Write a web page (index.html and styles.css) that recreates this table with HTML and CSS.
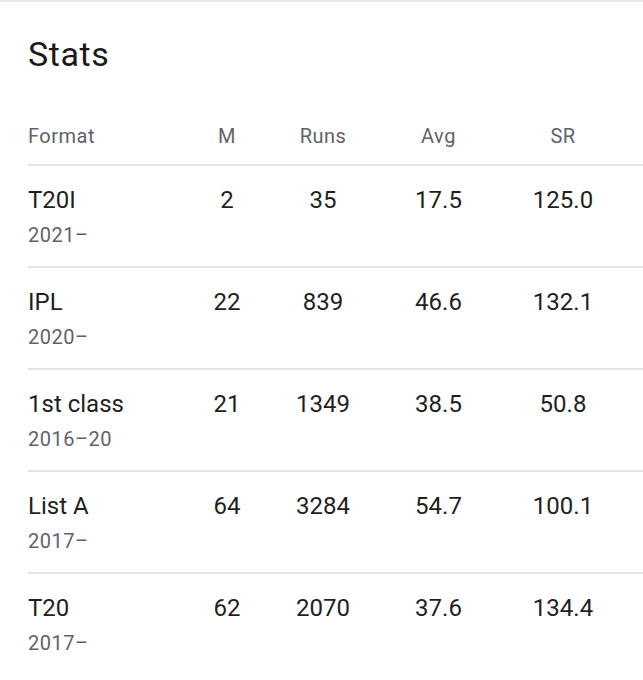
FILE: index.html
```html
<!DOCTYPE html>
<html lang="en">
<head>
<meta charset="utf-8">
<title>Stats</title>
<link rel="stylesheet" href="styles.css">
</head>
<body>
<main class="card">
  <h2 class="title">Stats</h2>
  <div class="stats">
    <div class="row head">
      <div class="cell fmt">Format</div>
      <div class="cell num">M</div>
      <div class="cell num">Runs</div>
      <div class="cell num">Avg</div>
      <div class="cell num">SR</div>
      <div class="cell"></div>
    </div>
    <div class="row">
      <div class="cell fmt"><div class="name">T20I</div><div class="years">2021–</div></div>
      <div class="cell num">2</div>
      <div class="cell num">35</div>
      <div class="cell num">17.5</div>
      <div class="cell num">125.0</div>
      <div class="cell"></div>
    </div>
    <div class="row">
      <div class="cell fmt"><div class="name">IPL</div><div class="years">2020–</div></div>
      <div class="cell num">22</div>
      <div class="cell num">839</div>
      <div class="cell num">46.6</div>
      <div class="cell num">132.1</div>
      <div class="cell"></div>
    </div>
    <div class="row">
      <div class="cell fmt"><div class="name">1st class</div><div class="years">2016–20</div></div>
      <div class="cell num">21</div>
      <div class="cell num">1349</div>
      <div class="cell num">38.5</div>
      <div class="cell num">50.8</div>
      <div class="cell"></div>
    </div>
    <div class="row">
      <div class="cell fmt"><div class="name">List A</div><div class="years">2017–</div></div>
      <div class="cell num">64</div>
      <div class="cell num">3284</div>
      <div class="cell num">54.7</div>
      <div class="cell num">100.1</div>
      <div class="cell"></div>
    </div>
    <div class="row last">
      <div class="cell fmt"><div class="name">T20</div><div class="years">2017–</div></div>
      <div class="cell num">62</div>
      <div class="cell num">2070</div>
      <div class="cell num">37.6</div>
      <div class="cell num">134.4</div>
      <div class="cell"></div>
    </div>
  </div>
</main>
</body>
</html>
```

FILE: styles.css
```css
html, body {
  margin: 0;
  padding: 0;
  background: #ffffff;
}

body {
  font-family: Roboto, "Noto Sans", Arial, sans-serif;
  color: #1f1f1f;
  overflow: hidden;
}

.card {
  border-top: 2px solid #e8eaed;
  padding: 32px 0 0 28px;
}

.title {
  margin: 0;
  font-size: 34px;
  line-height: 40px;
  font-weight: 400;
  letter-spacing: 0.6px;
  color: #1a1a1a;
}

.stats {
  margin-top: 50px;
}

.row {
  display: grid;
  grid-template-columns: 169px 60px 132px 99px 150px 1fr;
  align-items: start;
  border-bottom: 2px solid #e3e4e6;
  padding: 20px 0 19px;
}

.row.last {
  border-bottom: none;
}

.row.head {
  padding: 0 0 16px;
  font-size: 20px;
  line-height: 24px;
  letter-spacing: 0.5px;
  color: #5f6368;
}

.row:not(.head) .cell {
  font-size: 24px;
  line-height: 28px;
}

.num {
  text-align: center;
  white-space: nowrap;
}

.fmt {
  text-align: left;
}

.row:not(.head) .years {
  margin-top: 9px;
  font-size: 20px;
  line-height: 24px;
  letter-spacing: 0.5px;
  color: #5f6368;
}

.name {
  white-space: nowrap;
}
```
